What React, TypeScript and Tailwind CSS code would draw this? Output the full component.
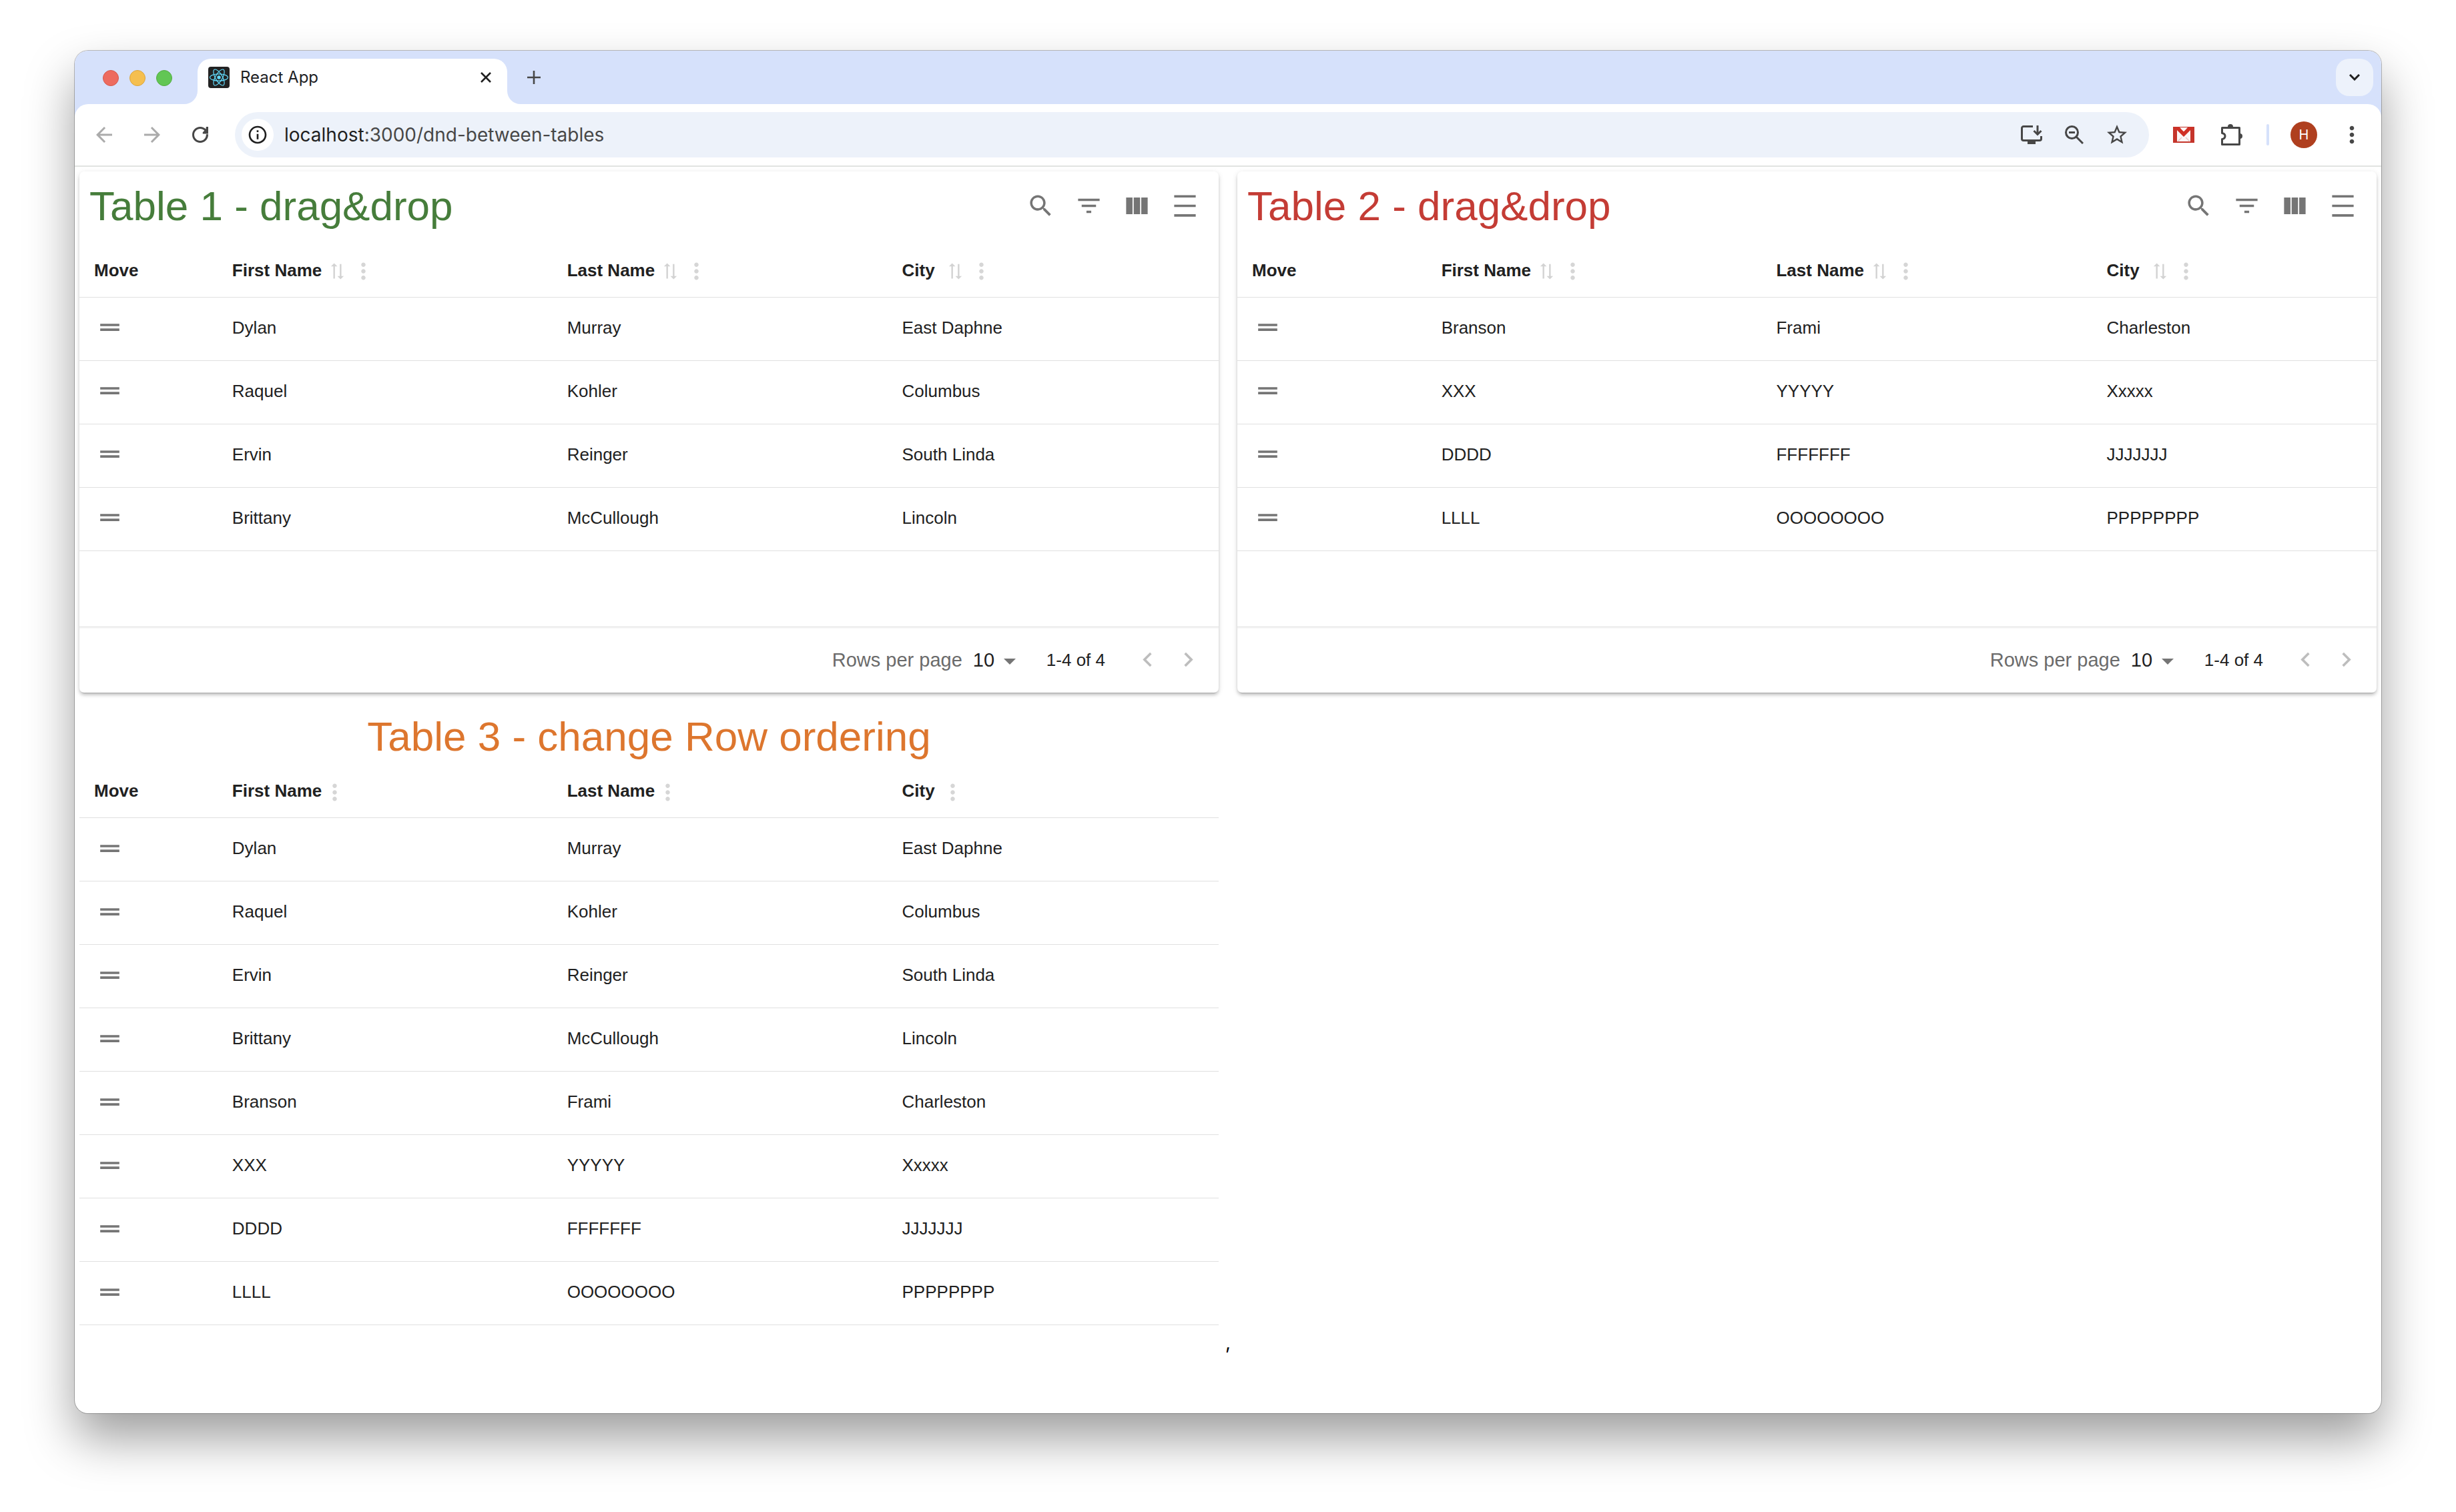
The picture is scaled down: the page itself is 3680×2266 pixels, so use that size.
import React from "react";

type Person = [string, string, string];

const local: Person[] = [
  ["Dylan", "Murray", "East Daphne"],
  ["Raquel", "Kohler", "Columbus"],
  ["Ervin", "Reinger", "South Linda"],
  ["Brittany", "McCullough", "Lincoln"],
];
const remote: Person[] = [
  ["Branson", "Frami", "Charleston"],
  ["XXX", "YYYYY", "Xxxxx"],
  ["DDDD", "FFFFFFF", "JJJJJJJ"],
  ["LLLL", "OOOOOOOO", "PPPPPPPP"],
];

const icons = {
  search:
    "M15.5 14h-.79l-.28-.27C15.41 12.59 16 11.11 16 9.5 16 5.91 13.09 3 9.5 3S3 5.91 3 9.5 5.91 16 9.5 16c1.61 0 3.09-.59 4.23-1.57l.27.28v.79l5 4.99L20.49 19zm-6 0C7.01 14 5 11.99 5 9.5S7.01 5 9.5 5 14 7.01 14 9.5 11.99 14 9.5 14",
  filter: "M10 18h4v-2h-4zM3 6v2h18V6zm3 7h12v-2H6z",
  columns: "M14.67 5v14H9.33V5zm1 14H21V5h-5.33zm-7.34 0V5H3v14z",
  density: "M3 3h18v2H3zm0 16h18v2H3zm0-8h18v2H3z",
  drag: "M20 9H4v2h16zM4 15h16v-2H4z",
  more: "M12 8c1.1 0 2-.9 2-2s-.9-2-2-2-2 .9-2 2 .9 2 2 2m0 2c-1.1 0-2 .9-2 2s.9 2 2 2 2-.9 2-2-.9-2-2-2m0 6c-1.1 0-2 .9-2 2s.9 2 2 2 2-.9 2-2-.9-2-2-2",
  sort: "M22 8l-4-4v3H3v2h15v3zM2 16l4 4v-3h15v-2H6v-3z",
  left: "M15.41 7.41 14 6l-6 6 6 6 1.41-1.41L10.83 12z",
  right: "M10 6 8.59 7.41 13.17 12l-4.58 4.59L10 18l6-6z",
  back: "M20 11H7.83l5.59-5.59L12 4l-8 8 8 8 1.41-1.41L7.83 13H20z",
  forward: "m12 4-1.41 1.41L16.17 11H4v2h12.17l-5.58 5.59L12 20l8-8z",
  reload:
    "M17.65 6.35C16.2 4.9 14.21 4 12 4c-4.42 0-7.99 3.58-7.99 8s3.57 8 7.99 8c4.42 0 8-3.58 8-8v-.5h-2.100v.5c0 3.310-2.590 6-5.900 6s-6-2.690-6-6 2.690-6 6-6c1.660 0 3.140.69 4.220 1.780L14.500 9.500V11H20V4h-2.100z",
  info: "M11 7h2v2h-2zm0 4h2v6h-2zm1-9C6.48 2 2 6.48 2 12s4.48 10 10 10 10-4.48 10-10S17.52 2 12 2m0 18c-4.41 0-8-3.59-8-8s3.59-8 8-8 8 3.59 8 8-3.59 8-8 8",
  star: "m22 9.24-7.19-.62L12 2 9.19 8.63 2 9.24l5.46 4.73L5.82 21 12 17.27 18.18 21l-1.63-7.03zM12 15.4l-3.76 2.27 1-4.28-3.32-2.88 4.38-.38L12 6.1l1.71 4.04 4.38.38-3.32 2.88 1 4.28z",
};

function Icon({ d, className }: { d: string; className: string }) {
  return (
    <svg viewBox="0 0 24 24" fill="currentColor" aria-hidden="true" className={"shrink-0 " + className}>
      <path d={d} />
    </svg>
  );
}

function IconButton({ label, d, box, icon }: { label: string; d: string; box: string; icon: string }) {
  return (
    <button type="button" aria-label={label} className={"flex shrink-0 items-center justify-center rounded-full " + box}>
      <Icon d={d} className={icon} />
    </button>
  );
}

function ReactLogo() {
  return (
    <svg viewBox="0 0 32 32" aria-hidden="true" className="size-8 shrink-0">
      <rect width="32" height="32" rx="4" fill="#222" />
      <g fill="none" stroke="#61dafb" strokeWidth="1.2">
        <ellipse cx="16" cy="16" rx="13.5" ry="5.2" />
        <ellipse cx="16" cy="16" rx="13.5" ry="5.2" transform="rotate(60 16 16)" />
        <ellipse cx="16" cy="16" rx="13.5" ry="5.2" transform="rotate(120 16 16)" />
      </g>
      <circle cx="16" cy="16" r="2.7" fill="#61dafb" />
    </svg>
  );
}

function TabStrip() {
  return (
    <header className="flex h-20 items-end bg-[#d6e1fb] pr-3">
      <div className="flex h-full items-center gap-4 pl-[42px] pt-0.5">
        <button type="button" aria-label="Close window" className="size-6 rounded-full border border-[#d5594c] bg-[#ed6b5f]" />
        <button type="button" aria-label="Minimize window" className="size-6 rounded-full border border-[#dba53d] bg-[#f5bf4f]" />
        <button type="button" aria-label="Zoom window" className="size-6 rounded-full border border-[#54ac42] bg-[#62c654]" />
      </div>
      <div className="ml-[18px] flex items-end">
        <svg viewBox="0 0 20 20" aria-hidden="true" className="size-5">
          <path d="M20 0v20H0A20 20 0 0 0 20 0" fill="#fff" />
        </svg>
        <div className="flex h-[68px] w-[464px] items-center rounded-t-[20px] bg-white pb-3 pl-4 pr-4">
          <ReactLogo />
          <span className="ml-4 flex-1 font-['Inter'] text-[24px] leading-8 text-[#202124]">React App</span>
          <button type="button" aria-label="Close tab" className="flex size-8 items-center justify-center">
            <svg viewBox="0 0 16 16" className="size-4" stroke="#1f1f1f" strokeWidth="2.6">
              <path d="M1 1l14 14M15 1L1 15" />
            </svg>
          </button>
        </div>
        <svg viewBox="0 0 20 20" aria-hidden="true" className="size-5">
          <path d="M0 0v20h20A20 20 0 0 1 0 0" fill="#fff" />
        </svg>
      </div>
      <button type="button" aria-label="New tab" className="flex h-20 w-10 items-center justify-center">
        <svg viewBox="0 0 20 20" className="size-5" stroke="#474747" strokeWidth="2.6">
          <path d="M10 0v20M0 10h20" />
        </svg>
      </button>
      <button
        type="button"
        aria-label="Search tabs"
        className="mb-3 ml-auto flex size-14 items-center justify-center rounded-[20px] bg-[#edf2fb] text-[#1f1f1f]"
      >
        <svg viewBox="0 0 16 10" className="h-2.5 w-4" fill="none" stroke="currentColor" strokeWidth="3">
          <path d="M1 1l7 7 7-7" />
        </svg>
      </button>
    </header>
  );
}

function AddressBar() {
  return (
    <div className="bg-[#d6e1fb]">
      <nav className="flex h-[94px] items-center rounded-t-[20px] border-b-2 border-[#e1e3e1] bg-white pr-2 text-[#474747]">
        <div className="flex w-60 shrink-0 items-center pl-2">
          <IconButton label="Back" d={icons.back} box="size-[72px] text-[#ababab]" icon="size-9" />
          <IconButton label="Forward" d={icons.forward} box="size-[72px] text-[#ababab]" icon="size-9" />
          <IconButton label="Reload" d={icons.reload} box="size-[72px]" icon="size-9" />
        </div>
        <div className="flex h-[68px] min-w-0 flex-1 items-center rounded-full bg-[#edf2fa] pl-2.5 pr-4">
          <IconButton label="Site information" d={icons.info} box="size-12 bg-white text-[#1f1f1f]" icon="size-8" />
          <div className="ml-4 flex-1 whitespace-nowrap font-['Inter'] text-[28px] leading-9 text-[#474747]">
            <span className="text-[#1f1f1f]">localhost</span>:3000/dnd-between-tables
          </div>
          <button type="button" aria-label="Install app" className="flex size-16 items-center justify-center">
            <svg viewBox="0 0 32 28" className="h-7 w-8" fill="none" stroke="currentColor" strokeWidth="3">
              <path d="M18 1.500H4A2.500 2.500 0 0 0 1.500 4v16A2.500 2.500 0 0 0 4 22.500h24a2.500 2.500 0 0 0 2.500-2.500v-4" />
              <path d="M25 0v13M19.500 8l5.500 5.500L30.500 8" />
              <path d="M10 23h12v5H10z" fill="currentColor" stroke="none" />
            </svg>
          </button>
          <button type="button" aria-label="Zoom level" className="flex size-16 items-center justify-center">
            <svg viewBox="0 0 28 28" className="size-7" fill="none" stroke="currentColor" strokeWidth="3">
              <circle cx="10.500" cy="10.500" r="9" />
              <path d="M17 17l10 10M6 10.500h9" />
            </svg>
          </button>
          <IconButton label="Bookmark this page" d={icons.star} box="size-16" icon="size-9" />
        </div>
        <button type="button" aria-label="Gmail" className="ml-4 flex size-[72px] items-center justify-center">
          <svg viewBox="0 0 32 24" className="h-6 w-8">
            <rect width="32" height="24" fill="#c5352b" />
            <path d="M6 3h20v19H6z" fill="#fbf6f6" />
            <path d="M7 22l6-6M25 22l-6-6" stroke="#e6c9c7" strokeWidth="1.5" />
            <path d="M2 1h8l6 6 6-6h8L16 15z" fill="#d02f25" />
            <path d="M10 1h12l-6 6z" fill="#fbf6f6" />
          </svg>
        </button>
        <button type="button" aria-label="Extensions" className="flex size-[72px] items-center justify-center">
          <svg viewBox="0 0 32 32" className="size-8" fill="none" stroke="currentColor" strokeWidth="3" strokeLinejoin="round">
            <path d="M1.500 5.500h26v25h-26v-8c6-1 6-8 0-9z" />
            <path d="M10 4a4 4 0 0 1 8 0zM28 14a4 4 0 0 1 0 8z" fill="currentColor" stroke="none" />
          </svg>
        </button>
        <div className="mx-4 h-8 w-1 rounded-full bg-[#d6e1fb]" />
        <button
          type="button"
          aria-label="Profile"
          className="ml-4 flex size-10 items-center justify-center rounded-full bg-[#af3f1f] font-['Inter'] text-[20px] leading-6 text-white"
        >
          H
        </button>
        <IconButton label="Browser menu" d={icons.more} box="ml-4 size-[72px]" icon="size-10" />
      </nav>
    </div>
  );
}

type Layout = "wide" | "shifted";

function PeopleTable({ rows, layout, sortable, label }: { rows: Person[]; layout: Layout; sortable: boolean; label: string }) {
  return (
    <table aria-label={label} className="w-full table-fixed border-collapse text-left text-[26px] leading-8 text-[#212121]">
      <colgroup>
        <col className={layout === "wide" ? "w-[12%]" : "w-[16.5%]"} />
        <col className="w-[29.4%]" />
        <col className={layout === "wide" ? "w-[29.4%]" : "w-[29%]"} />
        <col />
      </colgroup>
      <thead>
        <tr className="h-[86px] border-b border-[#e0e0e0]">
          <th scope="col" className="pl-[22px] pt-1.5 font-bold">Move</th>
          {["First Name", "Last Name", "City"].map((name) => (
            <th key={name} scope="col" className="pl-6 pt-1.5 font-bold">
              <div className="flex items-center">
                <span className="min-w-14">{name}</span>
                {sortable && (
                  <button type="button" aria-label={"Sort by " + name} className="ml-2 mr-1 mt-1 flex w-[31px] justify-center text-[#d3d3d3]">
                    <Icon d={icons.sort} className="size-[29px] -rotate-90" />
                  </button>
                )}
                <button type="button" aria-label={name + " column actions"} className="mt-1 text-[#d6d6d6]">
                  <Icon d={icons.more} className="size-[39px]" />
                </button>
              </div>
            </th>
          ))}
        </tr>
      </thead>
      <tbody>
        {rows.map((row) => (
          <tr key={row[0]} className="h-[95px] border-b border-[#e0e0e0]">
            <td className="pb-1 pl-6">
              <button type="button" aria-label={"Move " + row[0]} className="block text-[#757575]">
                <Icon d={icons.drag} className="size-[43px]" />
              </button>
            </td>
            {row.map((value) => (
              <td key={value} className="pb-1 pl-6">{value}</td>
            ))}
          </tr>
        ))}
      </tbody>
    </table>
  );
}

function Footer({ id }: { id: string }) {
  return (
    <div className="flex h-[99px] items-center justify-end border-t border-[#e0e0e0] pr-6 shadow-[inset_0_2px_2px_rgba(0,0,0,0.04)]">
      <label htmlFor={id} className="text-[29px] leading-9 text-[#6b6b6b]">Rows per page</label>
      <div className="relative ml-4 flex items-center">
        <select id={id} defaultValue="10" className="w-16 appearance-none bg-transparent text-[29px] leading-9 text-[#212121]">
          <option>10</option>
          <option>20</option>
        </select>
        <svg viewBox="0 0 18 9" aria-hidden="true" className="pointer-events-none absolute right-0 top-4 h-[9px] w-[18px] text-[#757575]">
          <path d="M0 0h18L9 9z" fill="currentColor" />
        </svg>
      </div>
      <span className="ml-[46px] text-[26px] leading-8 text-[#212121]">1-4 of 4</span>
      <IconButton label="Previous page" d={icons.left} box="ml-[42px] size-[43px] text-[#bdbdbd]" icon="size-[43px]" />
      <IconButton label="Next page" d={icons.right} box="ml-[18px] size-[43px] text-[#bdbdbd]" icon="size-[43px]" />
    </div>
  );
}

function Card({ title, color, rows, layout, id }: { title: string; color: string; rows: Person[]; layout: Layout; id: string }) {
  const tools = [
    ["Search", icons.search],
    ["Filters", icons.filter],
    ["Columns", icons.columns],
    ["Density", icons.density],
  ];
  return (
    <section className="rounded-[7px] bg-white shadow-[0_5px_2px_-4px_rgba(0,0,0,0.2),0_4px_4px_0_rgba(0,0,0,0.14),0_2px_9px_0_rgba(0,0,0,0.12)]">
      <div className="flex h-[102px] items-center px-[15px]">
        <h2 className={"flex-1 pt-0.5 text-[62px] leading-[70px] " + color}>{title}</h2>
        {tools.map(([label, d]) => (
          <IconButton key={label} label={label} d={d} box="size-[72px] text-[#757575]" icon="size-[43px]" />
        ))}
      </div>
      <PeopleTable rows={rows} layout={layout} sortable label={title} />
      <div className="h-[113px]" />
      <Footer id={id} />
    </section>
  );
}

export default function App() {
  return (
    <div className="min-h-screen overflow-hidden bg-white px-28 pb-[148px] pt-[76px] font-['Liberation_Sans',sans-serif]">
      <div className="flex min-h-[2042px] flex-col overflow-hidden rounded-[20px] bg-white shadow-[0_0_0_1px_rgba(0,0,0,0.25),0_38px_72px_rgba(0,0,0,0.38)]">
        <TabStrip />
        <AddressBar />
        <main className="grid grid-cols-2 gap-7 px-[7px] pt-[7px]">
          <Card title="Table 1 - drag&drop" color="text-[#467d3b]" rows={local} layout="wide" id="rows-1" />
          <Card title="Table 2 - drag&drop" color="text-[#c43c35]" rows={remote} layout="shifted" id="rows-2" />
          <section>
            <h2 className="pt-0.5 text-center text-[62px] leading-[72px] text-[#dd762e]">Table 3 - change Row ordering</h2>
            <PeopleTable rows={[...local, ...remote]} layout="wide" sortable={false} label="Table 3 - change Row ordering" />
          </section>
        </main>
        <p className="pt-2 text-center font-['Inter'] text-[28px] leading-9 text-black">,</p>
      </div>
    </div>
  );
}
